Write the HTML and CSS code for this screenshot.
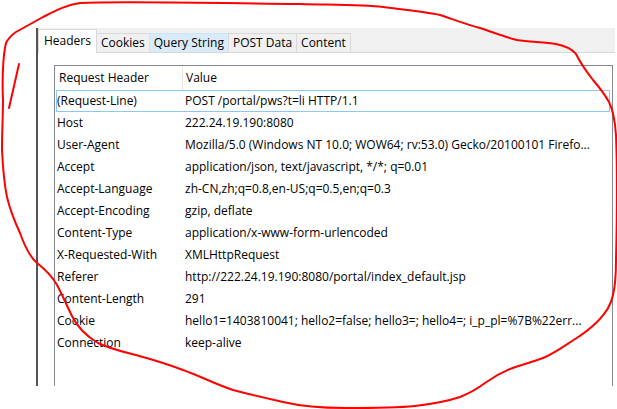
FILE: index.html
```html
<!DOCTYPE html>
<html lang="en">
<head>
    <meta charset="UTF-8">
    <title>Request Headers</title>
    <link rel="stylesheet" href="styles.css">
</head>
<body>

    <div class="page">
        <div class="inspector">
            <div class="tabs">
                <div class="tab active">Headers</div>
                <div class="tab">Cookies</div>
                <div class="tab hover">Query String</div>
                <div class="tab">POST Data</div>
                <div class="tab">Content</div>
            </div>
            <div class="pane">
                <div class="list">
                    <div class="list-head">
                        <div class="col-name">Request Header</div>
                        <div class="col-value">Value</div>
                    </div>
                    <div class="row selected"><div class="col-name">(Request-Line)</div><div class="col-value">POST /portal/pws?t=li HTTP/1.1</div></div>
                    <div class="row"><div class="col-name">Host</div><div class="col-value">222.24.19.190:8080</div></div>
                    <div class="row"><div class="col-name">User-Agent</div><div class="col-value">Mozilla/5.0 (Windows NT 10.0; WOW64; rv:53.0) Gecko/20100101 Firefo...</div></div>
                    <div class="row"><div class="col-name">Accept</div><div class="col-value">application/json, text/javascript, */*; q=0.01</div></div>
                    <div class="row"><div class="col-name">Accept-Language</div><div class="col-value">zh-CN,zh;q=0.8,en-US;q=0.5,en;q=0.3</div></div>
                    <div class="row"><div class="col-name">Accept-Encoding</div><div class="col-value">gzip, deflate</div></div>
                    <div class="row"><div class="col-name">Content-Type</div><div class="col-value">application/x-www-form-urlencoded</div></div>
                    <div class="row"><div class="col-name">X-Requested-With</div><div class="col-value">XMLHttpRequest</div></div>
                    <div class="row"><div class="col-name">Referer</div><div class="col-value">http://222.24.19.190:8080/portal/index_default.jsp</div></div>
                    <div class="row"><div class="col-name">Content-Length</div><div class="col-value">291</div></div>
                    <div class="row"><div class="col-name">Cookie</div><div class="col-value">hello1=1403810041; hello2=false; hello3=; hello4=; i_p_pl=%7B%22err...</div></div>
                    <div class="row"><div class="col-name">Connection</div><div class="col-value">keep-alive</div></div>
                </div>
            </div>
        </div>

        <!-- hand drawn red marker over the screenshot -->
        <svg class="scribble" width="617" height="409" viewBox="0 0 617 409">
            <path d="M3,100 C2,80 3,55 6,43 C9,37 12,35 16,32 L43,17 C55,11 66,5 80,3 C120,1 200,3 300,4 C340,5 365,5 383,7 C405,10 425,12 440,15 C455,20 468,25 480,28 C495,33 505,37 517,40 C530,42 545,42 556,44 C566,46 572,49 576,54 C580,62 586,71 593,80 C600,88 605,95 609,102 C613,110 615,120 616,135 C617,160 617,220 616,260 C616,275 615,287 613,295 C611,305 606,313 598,321 C590,329 582,335 572,341 C560,349 553,354 543,358 C530,363 520,365 510,369 C498,374 492,378 485,383 C477,389 470,393 460,397 C445,402 432,404 415,406 C395,408 370,408 345,408 C320,408 300,406 283,402 C265,398 248,394 233,390 C215,384 200,376 183,370 C170,365 160,362 150,359 C130,353 112,350 98,343 C86,336 78,328 72,316 C66,304 62,294 57,285 C52,276 46,270 37,263 C30,257 25,247 20,233 C14,220 10,210 7,197 C4,183 3,170 2,150 C2,130 3,115 3,100 Z"/>
            <path d="M19,64 L9,108"/>
        </svg>
    </div>

</body>
</html>
```

FILE: styles.css
```css
body {
    margin: 0;
    background-color: white;
    font-family: "Open Sans", "Noto Sans", sans-serif;
    font-size: 12px;
    color: #000;
}
.page {
    position: relative;
    width: 617px;
    height: 409px;
    overflow: hidden;
}

.inspector {
    margin-left: 36px;
    margin-top: 28px;
    width: 577px;
    height: 358px;
    border-left: 2px solid #555;
    box-shadow: inset 1px 0 #3d8ad6;
    overflow: hidden;
    display: flex;
    flex-direction: column;
}

/* tab strip */
.tabs {
    display: flex;
    align-items: flex-end;
    height: 24px;
    background-color: #f0f0f0;
    border-bottom: 1px solid #d9d9d9;
}
.tab {
    height: 19px;
    line-height: 18px;
    padding: 0 4px;
    border: 1px solid #d9d9d9;
    border-bottom: none;
    margin-left: -1px;
    box-sizing: border-box;
    background-color: #f0f0f0;
    white-space: nowrap;
}
.tab.active {
    height: 24px;
    line-height: 22px;
    margin-left: 0;
    margin-bottom: -1px;
    padding: 0 5px;
    background-color: white;
    position: relative;
    z-index: 1;
}
.tab.active + .tab {
    margin-left: -1px;
}
.tab.hover {
    background-color: #d9ebf9;
    border-color: #cce4f7;
}

/* list view */
.pane {
    flex: 1;
    background-color: white;
    padding: 12px 2px 0 16px;
    overflow: hidden;
}
.list {
    border: 1px solid #828790;
    height: 400px;
}
.list-head {
    display: flex;
    height: 24px;
    line-height: 23px;
}
.list-head .col-name {
    width: 128px;
    box-sizing: border-box;
    padding-left: 4px;
    border-right: 1px solid #e5e5e5;
}
.list-head .col-value {
    padding-left: 3px;
}
.row {
    display: flex;
    height: 22px;
    line-height: 20px;
    margin: 0 2px 0 1px;
    border: 1px solid transparent;
    box-sizing: border-box;
}
.row.selected {
    border-color: #8fc6f2;
}
.row .col-name {
    width: 128px;
    flex-shrink: 0;
    white-space: nowrap;
}
.col-value {
    flex: 1;
    white-space: nowrap;
    overflow: hidden;
}

.scribble {
    position: absolute;
    top: 0;
    left: 0;
    pointer-events: none;
    fill: none;
    stroke: #f00;
    stroke-width: 2;
    stroke-linecap: round;
    stroke-linejoin: round;
}
```
